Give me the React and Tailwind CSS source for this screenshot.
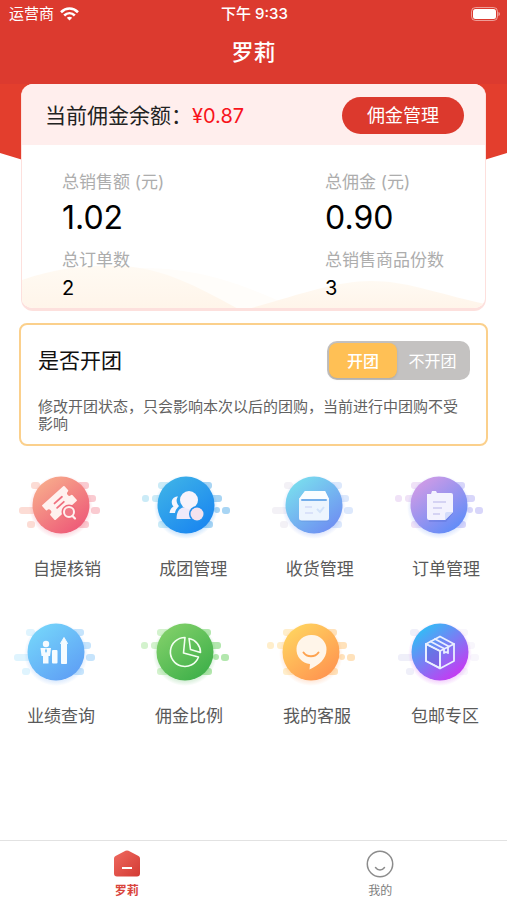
import React, { useState } from 'react';

const DOTS_A = [
  [-30, -23, 9, 7],
  [-42, 2, 17, 7],
  [-34, 16, 8, 7],
  [16, -23, 12, 7],
  [22, -10, 13, 7],
  [30, 2, 9, 7],
  [16, 16, 12, 7],
];

const DOTS_B = [
  [-44, -10, 7, 7],
  [-34, -10, 12, 7],
  [-28, -23, 12, 7],
  [-28, 16, 12, 7],
  [14, -23, 12, 7],
  [24, -10, 12, 7],
  [28, 2, 6, 6],
  [36, 2, 8, 7],
  [14, 16, 13, 7],
];

const ROWS = [
  [
    { id: 'verify', label: '自提核销', cx: 46, from: '#f7a98b', to: '#ee5a78', left: '#fcdcd5', right: '#facbd1', dots: DOTS_A },
    { id: 'group', label: '成团管理', cx: 45, from: '#3cb0e8', to: '#1a86f0', left: '#cbebf7', right: '#a8d5f4', dots: DOTS_B },
    { id: 'receive', label: '收货管理', cx: 46, from: '#79dcee', to: '#6f8ff2', left: '#f3f1f6', right: '#dce8fc', dots: DOTS_A },
    { id: 'order', label: '订单管理', cx: 45, from: '#cf9be6', to: '#5f8cf8', left: '#f0e2f7', right: '#d8d6fa', dots: DOTS_B },
  ],
  [
    { id: 'report', label: '业绩查询', cx: 47, from: '#74d3fa', to: '#5fa0f5', left: '#dff4fe', right: '#c6e4fc', dots: DOTS_A },
    { id: 'ratio', label: '佣金比例', cx: 48, from: '#7fcf68', to: '#3fb04a', left: '#d3f2cd', right: '#b3e7ae', dots: DOTS_B },
    { id: 'service', label: '我的客服', cx: 46, from: '#ffd25f', to: '#ff9550', left: '#ffeecb', right: '#ffe2bb', dots: DOTS_B },
    { id: 'postage', label: '包邮专区', cx: 47, from: '#32bdf6', to: '#c936f2', left: '#efeff9', right: '#f8f6fc', dots: DOTS_A },
  ],
];

const Glyph = ({ id }) => {
  switch (id) {
    case 'verify':
      return (
        <g>
          <g transform="translate(-1.5 -2) rotate(-42)">
            <path
              d="M-14 -9H14V-4a3.500 3.500 0 0 0 0 7V9H-14V3a3.500 3.500 0 0 0 0 -7Z"
              fill="#fff1ef"
              stroke="#fff1ef"
              strokeWidth="2"
              strokeLinejoin="round"
            />
            <path d="M-4 -3H6M-5 2H4" stroke="#f0707f" strokeWidth="1.800" strokeLinecap="round" />
          </g>
          <circle cx="8" cy="7" r="7.5" fill="#ef6b7d" />
          <circle cx="8" cy="7" r="5" fill="#f07a88" stroke="#fff1ef" strokeWidth="2" />
          <path d="M11.500 11L14 13.500" stroke="#fff1ef" strokeWidth="2.200" strokeLinecap="round" />
        </g>
      );
    case 'group':
      return (
        <g>
          <path d="M-9 -8.500C-14 -8-16 -2-12.500 1.500C-15 3-16 5-16.500 8H-11C-10.500 5-9 3-7 1C-10 -2-10 -6-8 -8.500Z" fill="#f4f5fd" />
          <path d="M-9.500 14C-9.500 6-6 2 0 2H6C10 4 10 14 6 14Z" fill="#eeeafa" />
          <circle cx="3" cy="-5" r="9" fill="#f7f3fb" />
          <circle cx="11" cy="9" r="8" fill="#2390ee" />
          <circle cx="11" cy="9" r="6.500" fill="#f4e2ee" />
        </g>
      );
    case 'receive':
      return (
        <g>
          <rect x="-14" y="-7" width="29" height="24" rx="2" fill="#5f86d8" opacity="0.25" />
          <path d="M-9 -14H11L15 -6V13a2.500 2.500 0 0 1-2.500 2.500H-12.500A2.500 2.500 0 0 1-15 13V-6Z" fill="#edf5fe" />
          <path d="M-9 -14H11L15 -6H-15Z" fill="#fafdff" />
          <path d="M-12 -5H12" stroke="#74aeea" strokeWidth="2" strokeLinecap="round" />
          <path d="M-9 2H-2M-9 8H-1" stroke="#d3dcf7" strokeWidth="1.500" />
          <path d="M3 4L6 7L10 2" stroke="#d3e3fa" strokeWidth="2" fill="none" />
        </g>
      );
    case 'order':
      return (
        <g>
          <path d="M-12 -8H14V8L7 17H-10Z" fill="#4f68cc" opacity="0.3" />
          <path d="M-12 -11H-8L-7 -14H-3L-2 -12H12a2 2 0 0 1 2 2V7L6 15H-10a2 2 0 0 1-2-2Z" fill="#f3f2fe" />
          <path d="M14 7H8a2 2 0 0 0-2 2V15Z" fill="#d4dcfb" />
          <path d="M-6 -3H7M-6 3H3M-6 9H1" stroke="#cbc9f0" strokeWidth="1.500" />
        </g>
      );
    case 'report':
      return (
        <g fill="#f5fbff">
          <circle cx="-10" cy="-8" r="3.200" />
          <path d="M-15.500 -4H-5L-6 4L-7.500 4V11.500H-13V4L-14.500 4Z" />
          <path d="M-10 -4L-11 -1L-10 1L-9 -1Z" fill="#69bdf8" />
          <rect x="-4" y="-2" width="5.500" height="13.500" rx="1" />
          <path d="M8 -14.500L11.500 -8.500H10.500V11.500H5.500V-8.500H4.500Z" stroke="#f5fbff" strokeLinejoin="round" />
        </g>
      );
    case 'ratio':
      return (
        <g fill="none" stroke="#f2fff0" strokeWidth="1.600" strokeLinejoin="round">
          <path d="M0 -14.500A14.500 14.500 0 1 0 13.500 5L-1.500 1Z" />
          <path d="M4 -13.500A14 14 0 0 1 15.500 0.500L5.500 -2.500Z" />
        </g>
      );
    case 'service':
      return (
        <g>
          <path d="M1 -17a14.500 14.500 0 0 1 14.500 14.500C15.500 7 8 13 -1.500 17.500L-1 12A14.500 14.500 0 0 1 1 -17Z" fill="#fff5e9" />
          <path d="M-7.500 0.500C-4 5.500 4 5.500 7.500 0.500" fill="none" stroke="#fda24f" strokeWidth="2" strokeLinecap="round" />
        </g>
      );
    case 'postage':
      return (
        <g fill="none" stroke="#e9efff" strokeWidth="1.800" strokeLinejoin="round" strokeLinecap="round">
          <path d="M-14 -8L0 -1V16L-14 9Z" fill="#5a55c8" fillOpacity="0.35" />
          <path d="M-14 -8L0 -15.500L14 -8V9L0 16.500L-14 9Z" />
          <path d="M-14 -8L0 -1L14 -8M0 -1V16" />
          <path d="M-9.500 -10.500L4 -3.500V1L6 0L8 1V-4.500M-5 -13L9 -5.500" />
        </g>
      );
    default:
      return null;
  }
};

const MenuIcon = ({ item }) => (
  <svg className="w-26 h-18" viewBox="0 0 104 72" aria-hidden="true">
    <defs>
      <linearGradient id={`fill-${item.id}`} x1="0.15" y1="0.1" x2="0.8" y2="0.95">
        <stop offset="0" stopColor={item.from} />
        <stop offset="1" stopColor={item.to} />
      </linearGradient>
      <radialGradient id={`glow-${item.id}`}>
        <stop offset="0.8" stopColor={item.to} stopOpacity="0.25" />
        <stop offset="1" stopColor={item.to} stopOpacity="0" />
      </radialGradient>
    </defs>
    <g transform={`translate(${item.cx} 36)`}>
      {item.dots.map(([x, y, w, h]) => (
        <rect key={`${x},${y}`} x={x} y={y} width={w} height={h} rx={3} fill={x < 0 ? item.left : item.right} />
      ))}
      <circle cy="2" r="32" fill={`url(#glow-${item.id})`} />
      <circle r="28.5" fill={`url(#fill-${item.id})`} />
      <Glyph id={item.id} />
    </g>
  </svg>
);

const StatusBar = () => (
  <div className="grid grid-cols-3 items-center h-7 pl-[9px] pr-[7px] text-[15px]">
    <div className="flex items-center gap-1.5">
      <span>运营商</span>
      <svg className="w-[19px] h-[14px]" viewBox="0 0 19 14" fill="none" stroke="#fff" strokeWidth="2.600" aria-hidden="true">
        <path d="M1 5.200C6 0.300 13 0.300 18 5.200" />
        <path d="M4.200 8.500C7.300 5.500 11.700 5.500 14.800 8.500" />
        <path d="M9.500 13.500L6.800 10.800C8.200 9.400 10.800 9.400 12.200 10.800Z" fill="#fff" stroke="none" />
      </svg>
    </div>
    <span className="text-center font-medium">下午 9:33</span>
    <svg className="w-[29px] h-[14px] justify-self-end" viewBox="0 0 29 14" aria-hidden="true">
      <rect x="0.500" y="0.500" width="26" height="13" rx="4" fill="none" stroke="#fff" strokeOpacity="0.5" />
      <rect x="2" y="2" width="23" height="10" rx="2.500" fill="#fff" />
      <path d="M27.500 5V9C29.300 8.300 29.300 5.700 27.500 5Z" fill="#fff" fillOpacity="0.6" />
    </svg>
  </div>
);

const Stat = ({ label, value, large }) => (
  <div>
    <dt className="text-[17px] leading-6 text-[#adadad]">{label}</dt>
    <dd className={large ? 'text-[32px] leading-[48px] text-black' : 'text-[20px] leading-8 text-black'}>{value}</dd>
  </div>
);

const BalanceCard = () => (
  <section className="relative mx-[21px] rounded-xl overflow-hidden border border-t-0 border-b-3 border-[#fde0dd] bg-white">
    <div className="flex items-center justify-between h-[61px] pt-0.5 pl-[23px] pr-[21px] bg-[#ffeeed]">
      <p className="text-[21px] text-[#222]">
        当前佣金余额：<span className="text-[20px] text-[#f8131b]">¥0.87</span>
      </p>
      <button type="button" className="h-[37px] w-[122px] rounded-full bg-[#dc392d] text-[18px] text-white">
        佣金管理
      </button>
    </div>
    <div className="relative">
      <svg className="absolute bottom-0 left-0 w-full h-11" viewBox="0 0 464 44" preserveAspectRatio="none" aria-hidden="true">
        <defs>
          <linearGradient id="hill" x1="0" y1="0" x2="0" y2="1">
            <stop offset="0" stopColor="#fffaf3" />
            <stop offset="1" stopColor="#fff5ea" />
          </linearGradient>
        </defs>
        <path d="M120 4C190 4 235 28 275 44H90Z" fill="#fffdfa" />
        <path d="M0 16C40 2 70 1 100 2C140 4 175 22 215 44H0Z" fill="url(#hill)" />
        <path d="M230 44C280 30 315 17 350 17S410 28 464 40V44Z" fill="url(#hill)" />
      </svg>
      <dl className="relative grid grid-cols-[263px_1fr] gap-y-1.5 pl-10 pt-[25px] pb-1">
        <Stat label="总销售额 (元)" value="1.02" large />
        <Stat label="总佣金 (元)" value="0.90" large />
        <Stat label="总订单数" value="2" />
        <Stat label="总销售商品份数" value="3" />
      </dl>
    </div>
  </section>
);

const GroupSwitch = () => {
  const [open, setOpen] = useState(true);
  const on = 'bg-[#ffc055] font-medium shadow-sm';

  return (
    <section className="mx-[19px] mt-3 pl-[17px] pr-4 pt-4 pb-3 rounded-lg border-2 border-[#fbd08c]">
      <div className="flex items-center justify-between">
        <h2 className="text-[21px] text-[#111]">是否开团</h2>
        <div className="flex w-[143px] h-[39px] p-0.5 rounded-[10px] bg-[#c4c2c1] text-[16px] text-white" role="group" aria-label="是否开团">
          <button type="button" aria-pressed={open} onClick={() => setOpen(true)} className={`w-[68px] rounded-lg ${open ? on : ''}`}>
            开团
          </button>
          <button type="button" aria-pressed={!open} onClick={() => setOpen(false)} className={`flex-1 rounded-lg ${open ? '' : on}`}>
            不开团
          </button>
        </div>
      </div>
      <p className="mt-[18px] text-[15px] leading-[17px] text-[#626262]">
        修改开团状态，只会影响本次以后的团购，当前进行中团购不受影响
      </p>
    </section>
  );
};

const App = () => {
  return (
    <div className="min-h-screen flex flex-col bg-white font-['Inter','Noto_Sans_CJK_SC',sans-serif]">
      <div className="relative">
        <svg className="absolute top-0 left-0 w-full h-[170px]" viewBox="0 0 507 170" preserveAspectRatio="none" aria-hidden="true">
          <path d="M0 0H507V153Q254 235 0 153Z" fill="#e33e2d" />
        </svg>
        <header className="relative bg-[#dc3a2f] text-white">
          <StatusBar />
          <h1 className="h-14 pt-2 text-center text-[22px] leading-8 font-medium">罗莉</h1>
        </header>
        <BalanceCard />
      </div>

      <GroupSwitch />

      <main className="mt-[23px] flex flex-col gap-[35px]">
        {ROWS.map((row, i) => (
          <div key={row[0].id} className={`flex justify-between ${i === 0 ? 'pl-[15px] pr-[9px]' : 'pl-[9px] pr-[10px]'}`}>
            {row.map((item) => (
              <button key={item.id} type="button" className="flex flex-col items-center gap-4 text-[17px] leading-6 text-[#5a5a5a]">
                <MenuIcon item={item} />
                {item.label}
              </button>
            ))}
          </div>
        ))}
      </main>

      <nav className="mt-auto grid grid-cols-2 h-[60px] border-t border-[#e2e2e2] text-[12px] leading-4">
        <a href="#home" className="flex flex-col items-center gap-1 pt-2 font-bold text-[#d9443c]">
          <svg className="size-[30px]" viewBox="0 0 30 30" aria-hidden="true">
            <defs>
              <linearGradient id="home" x1="0" y1="0" x2="1" y2="1">
                <stop offset="0" stopColor="#ef6a60" />
                <stop offset="1" stopColor="#d33a33" />
              </linearGradient>
            </defs>
            <path d="M13.500 1.800Q15 1 16.500 1.800L26.500 7Q28 7.800 28 9.500V24.500Q28 27.500 25 27.500H5Q2 27.500 2 24.500V9.500Q2 7.800 3.500 7Z" fill="url(#home)" />
            <path d="M10 19H20" stroke="#fff" strokeWidth="2" />
          </svg>
          罗莉
        </a>
        <a href="#mine" className="flex flex-col items-center gap-1 pt-2 text-[#7d7d7d]">
          <svg className="size-[30px]" viewBox="0 0 30 30" fill="none" stroke="#8c8c8c" strokeWidth="1.500" strokeLinecap="round" aria-hidden="true">
            <circle cx="15" cy="15" r="12.700" />
            <path d="M10.500 18.500C13 21.800 17 21.800 19.500 18.500" />
          </svg>
          我的
        </a>
      </nav>
    </div>
  );
};

export default App;
